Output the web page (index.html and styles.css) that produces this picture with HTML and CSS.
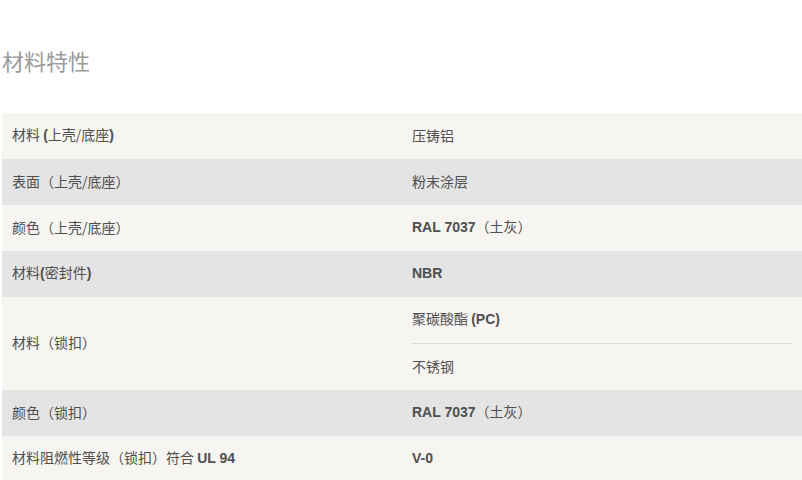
FILE: index.html
```html
<!DOCTYPE html>
<html lang="zh">
<head>
<meta charset="utf-8">
<link rel="stylesheet" href="styles.css">
</head>
<body>
<div class="page">
  <h2 class="title">材料特性</h2>
  <table class="props">
    <tr class="odd">
      <td class="k">材料 <b>(</b>上壳/底座<b>)</b></td>
      <td class="v">压铸铝</td>
    </tr>
    <tr class="even">
      <td class="k">表面（上壳/底座）</td>
      <td class="v">粉末涂层</td>
    </tr>
    <tr class="odd">
      <td class="k">颜色（上壳/底座）</td>
      <td class="v"><b>RAL 7037</b>（土灰）</td>
    </tr>
    <tr class="even">
      <td class="k">材料<b>(</b>密封件<b>)</b></td>
      <td class="v"><b>NBR</b></td>
    </tr>
    <tr class="odd">
      <td class="k" rowspan="2">材料（锁扣）</td>
      <td class="v"><div class="sub first"><span>聚碳酸酯 <b>(PC)</b></span></div></td>
    </tr>
    <tr class="odd">
      <td class="v"><div class="sub"><span>不锈钢</span></div></td>
    </tr>
    <tr class="even">
      <td class="k">颜色（锁扣）</td>
      <td class="v"><b>RAL 7037</b>（土灰）</td>
    </tr>
    <tr class="odd">
      <td class="k">材料阻燃性等级（锁扣）符合 <b>UL 94</b></td>
      <td class="v"><b>V-0</b></td>
    </tr>
  </table>
</div>
</body>
</html>
```

FILE: styles.css
```css
html, body {
  margin: 0;
  padding: 0;
  background: #ffffff;
}
.page {
  padding-left: 2px;
  font-family: "Noto Sans CJK SC", "Liberation Sans", sans-serif;
}
.title {
  margin: 45px 0 38px 0;
  font-size: 22px;
  line-height: 30px;
  font-weight: normal;
  color: #9b9b9b;
}
.props {
  width: 800px;
  border-collapse: collapse;
  table-layout: fixed;
  font-size: 14px;
  color: #4f4f4f;
}
.props b {
  font-family: "Liberation Sans", "Noto Sans CJK SC", sans-serif;
  font-weight: bold;
}
.props td {
  padding: 0 10px 3px 10px;
  height: 43px;
  line-height: 20px;
  vertical-align: middle;
}
.props .odd {
  background: #f6f5f2;
}
.props .even {
  background: #e4e4e4;
}
.props .k {
  width: 380px;
}
.sub {
  height: 43px;
  padding-bottom: 3px;
  display: flex;
  align-items: center;
}
.sub.first {
  border-bottom: 1px solid #dcdcdc;
}
.props td:has(.sub) {
  padding-top: 0;
  padding-bottom: 0;
  height: auto;
}
```
